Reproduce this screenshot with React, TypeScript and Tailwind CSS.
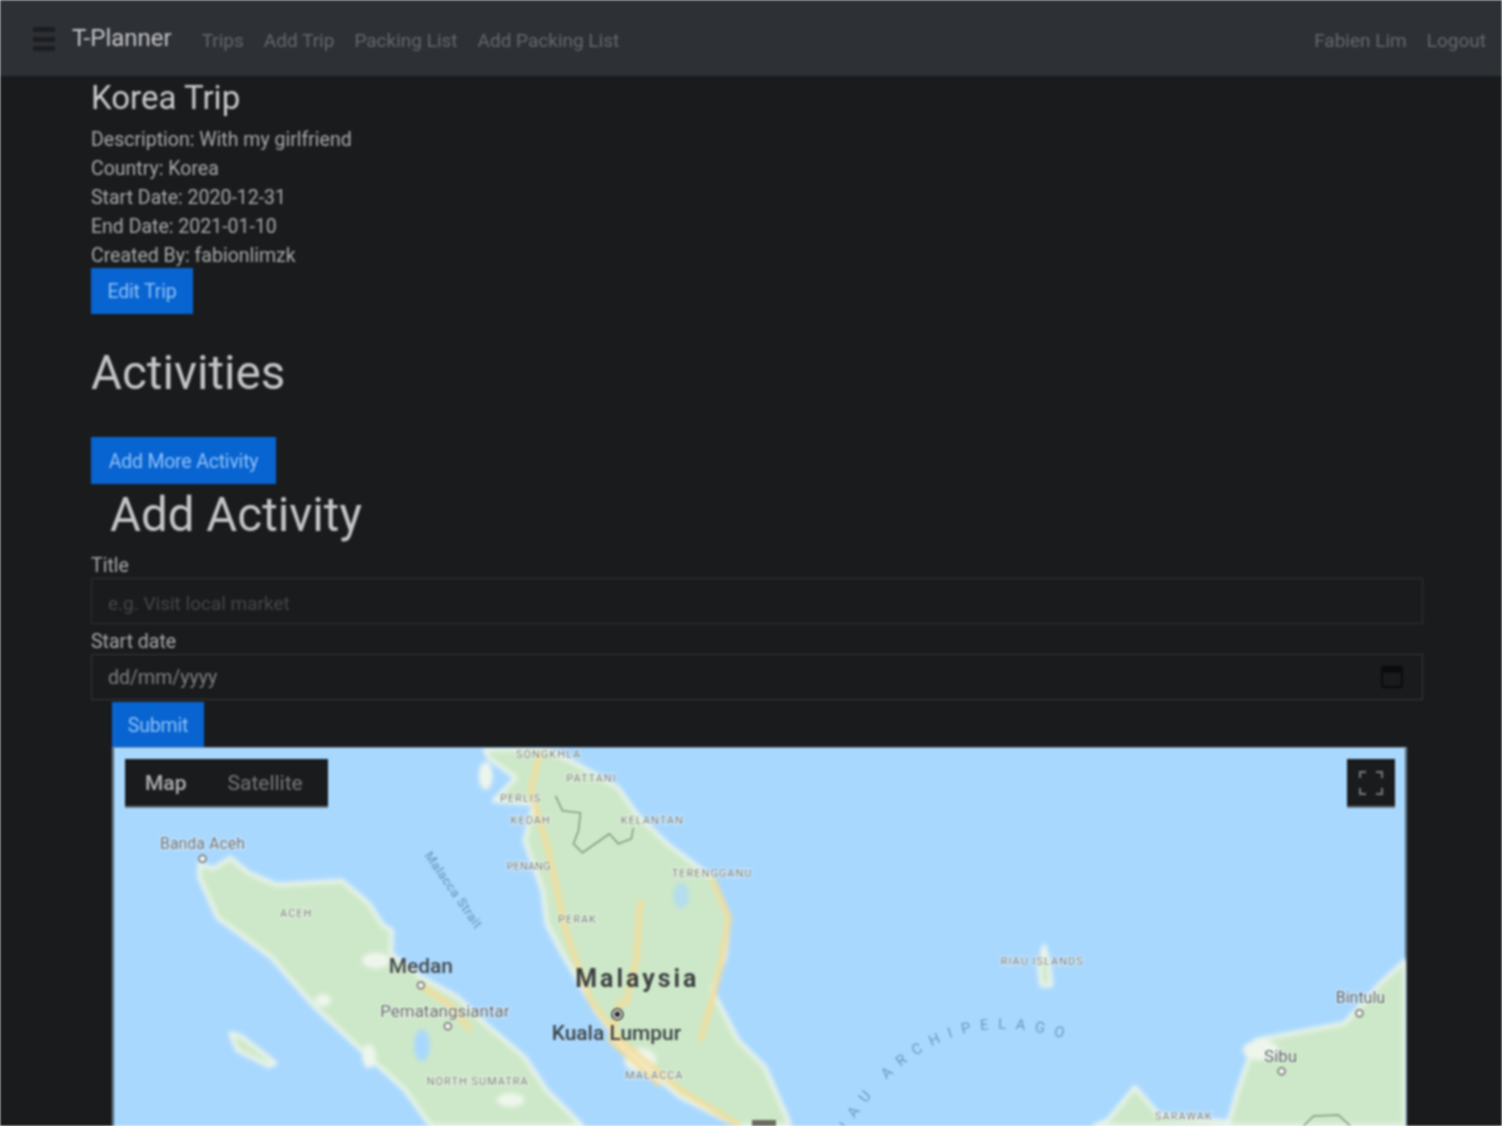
const NAV_LINKS = ["Trips", "Add Trip", "Packing List", "Add Packing List"];

const TRIP_FACTS = [
  "Description: With my girlfriend",
  "Country: Korea",
  "Start Date: 2020-12-31",
  "End Date: 2021-01-10",
  "Created By: fabionlimzk",
];

const LAND = [
  "198,863 212,868 229,857 247,872 275,884 341,880 368,903 382,925 391,930 390,953 421,977 457,997 484,1023 524,1057 546,1090 582,1126 430,1126 404,1090 368,1057 314,1007 270,957 216,917 198,877",
  "484,748 546,748 580,765 618,787 636,813 667,843 712,877 729,917 725,957 712,990 738,1040 765,1067 787,1117 790,1126 738,1126 680,1097 627,1053 595,1010 560,950 546,923 542,890 524,840 533,803 493,800 515,777 488,757",
  "1407,960 1382,983 1346,1023 1257,1040 1239,1090 1230,1122 1160,1115 1136,1087 1109,1120 1095,1126 1407,1126",
  "229,1033 240,1036 274,1063 268,1066 236,1050",
  "1045,945 1050,965 1052,985 1042,985 1040,965",
];

const ROADS = [
  "540,750 530,790 548,850 565,930 590,1000 620,1040 680,1090 740,1126",
  "712,877 729,917 722,960 712,1000 700,1040",
  "420,985 450,1005 470,1030",
  "620,1000 610,1040 660,1085",
  "640,900 636,960 625,1005",
];

// whitish patches where the towns and coast wash out the green
const PATCHES = [
  { x: 375, y: 960, rx: 14, ry: 8 },
  { x: 322, y: 1000, rx: 8, ry: 6 },
  { x: 368, y: 1056, rx: 7, ry: 12 },
  { x: 510, y: 1100, rx: 14, ry: 7 },
  { x: 485, y: 775, rx: 7, ry: 14 },
  { x: 640, y: 1060, rx: 16, ry: 12 },
  { x: 1262, y: 1050, rx: 18, ry: 10 },
];

const PLACES = [
  { label: "SONGKHLA", x: 548, y: 757, size: 11, fill: "#7b8079", spacing: 1 },
  { label: "PATTANI", x: 591, y: 781, size: 11, fill: "#7b8079", spacing: 1 },
  { label: "PERLIS", x: 520, y: 801, size: 11, fill: "#7b8079", spacing: 1 },
  { label: "KEDAH", x: 530, y: 823, size: 11, fill: "#7b8079", spacing: 1 },
  { label: "KELANTAN", x: 652, y: 823, size: 11, fill: "#7b8079", spacing: 1 },
  { label: "PENANG", x: 528, y: 869, size: 11, fill: "#7b8079", spacing: 0 },
  { label: "TERENGGANU", x: 712, y: 876, size: 11, fill: "#7b8079", spacing: 1 },
  { label: "PERAK", x: 577, y: 922, size: 11, fill: "#7b8079", spacing: 1 },
  { label: "ACEH", x: 295, y: 916, size: 11, fill: "#7b8079", spacing: 1 },
  { label: "Banda Aceh", x: 201, y: 848, size: 16, fill: "#6c7075", spacing: 0 },
  { label: "Pematangsiantar", x: 444, y: 1017, size: 17, fill: "#686c6c", spacing: 0 },
  { label: "NORTH SUMATRA", x: 477, y: 1085, size: 11, fill: "#7b8079", spacing: 1 },
  { label: "MALACCA", x: 654, y: 1079, size: 11, fill: "#7b8079", spacing: 1 },
  { label: "RIAU ISLANDS", x: 1043, y: 965, size: 11, fill: "#7b8079", spacing: 1 },
  { label: "Bintulu", x: 1362, y: 1003, size: 16, fill: "#5c6268", spacing: 0 },
  { label: "Sibu", x: 1282, y: 1062, size: 17, fill: "#5c6268", spacing: 0 },
  { label: "SARAWAK", x: 1185, y: 1120, size: 11, fill: "#7b8079", spacing: 1 },
];

function TownDot({ x, y }: { x: number; y: number }) {
  return <circle cx={x} cy={y} r="3.5" fill="#f4f4f0" stroke="#6f7473" strokeWidth="1.5" />;
}

function MapDrawing() {
  return (
    <svg viewBox="112 747 1295 379" className="block h-full w-full">
      <rect x="112" y="747" width="1295" height="379" fill="#a9d8fe" />
      <g className="blur-[2px]">
        {LAND.map((points) => (
          <polygon key={points} points={points} fill="#cde8c8" stroke="#eef6ec" strokeWidth="4" strokeLinejoin="round" />
        ))}
        {PATCHES.map((patch) => (
          <ellipse key={patch.x} cx={patch.x} cy={patch.y} rx={patch.rx} ry={patch.ry} fill="#eef6ec" />
        ))}
        {ROADS.map((points) => (
          <polyline key={points} points={points} fill="none" stroke="#f6dc96" strokeWidth="5" strokeLinejoin="round" />
        ))}
        <ellipse cx="681" cy="895" rx="8" ry="13" fill="#a9d8fe" opacity="0.7" />
        <ellipse cx="421" cy="1045" rx="8" ry="16" fill="#a9d8fe" />
      </g>
      <polyline
        points="555,795 562,810 580,812 578,830 573,843 582,852 609,833 618,843 631,838 633,827"
        fill="none"
        stroke="#7d9a80"
        strokeWidth="1.5"
      />
      <polyline points="1305,1126 1315,1116 1340,1115 1352,1126" fill="none" stroke="#7d9a80" strokeWidth="1.5" />

      <g fontFamily="Roboto, sans-serif" textAnchor="middle">
        {PLACES.map((place) => (
          <text
            key={place.label}
            x={place.x}
            y={place.y}
            fontSize={place.size}
            fill={place.fill}
            letterSpacing={place.spacing}
            stroke="#ffffff"
            strokeOpacity="0.55"
            strokeWidth="2"
            paintOrder="stroke"
          >
            {place.label}
          </text>
        ))}
        <text x="420" y="973" fontSize="21" fontWeight="500" fill="#45494b">Medan</text>
        <text x="637" y="987" fontSize="25" fontWeight="700" letterSpacing="3" fill="#3c4043">Malaysia</text>
        <text x="616" y="1040" fontSize="21" fontWeight="500" fill="#3c4347">Kuala Lumpur</text>
        <text
          transform="translate(449 892) rotate(55)"
          x="0"
          y="0"
          fontSize="13"
          fontWeight="500"
          letterSpacing="0.5"
          fill="#6f9cc6"
        >
          Malacca Strait
        </text>
      </g>

      <path id="archipelago-curve" d="M 838 1146 C 885 1062 960 1000 1075 1042" fill="none" />
      <text fontFamily="Roboto, sans-serif" fontSize="15" letterSpacing="9.2" fill="#6d97bc">
        <textPath href="#archipelago-curve">RIAU ARCHIPELAGO</textPath>
      </text>

      <TownDot x={201} y={858} />
      <TownDot x={420} y={985} />
      <TownDot x={447} y={1026} />
      <TownDot x={1361} y={1013} />
      <TownDot x={1283} y={1071} />
      <circle cx="617" cy="1014" r="5.5" fill="#f4f4f0" stroke="#2d2f30" strokeWidth="1.5" />
      <circle cx="617" cy="1014" r="3" fill="#2d2f30" />
      <rect x="752" y="1120" width="24" height="6" fill="#6a6a60" />
    </svg>
  );
}

function BlueButton({ label, className }: { label: string; className: string }) {
  return (
    <button type="button" className={`block bg-[#0864d1] pt-[2px] text-[19.5px] tracking-[-0.2px] text-[#8fc1f7] ${className}`}>
      {label}
    </button>
  );
}

export default function App() {
  return (
    <div className="h-[1126px] overflow-hidden bg-[#1a1b1d] font-['Roboto',sans-serif] blur-[1px]">
      <nav className="flex h-[76px] items-center bg-[#2d3035] pl-[33px] pr-[16px]">
        <svg width="22" height="26" viewBox="0 0 22 26" className="mt-[2px]">
          <rect x="0" y="1" width="22" height="5" fill="#1d1e21" />
          <rect x="0" y="11" width="22" height="5" fill="#1d1e21" />
          <rect x="0" y="20" width="22" height="5" fill="#1d1e21" />
        </svg>
        <span className="mb-[1px] ml-[17px] text-[24px] text-[#c4c5c7]">T-Planner</span>
        <div className="ml-[30px] mt-[6px] flex gap-[20px] text-[19px] text-[#65686d]">
          {NAV_LINKS.map((link) => (
            <span key={link}>{link}</span>
          ))}
        </div>
        <div className="ml-auto mt-[6px] flex gap-[20px] text-[19px] text-[#65686d]">
          <span>Fabien Lim</span>
          <span>Logout</span>
        </div>
      </nav>

      <main className="pl-[91px] pr-[79px]">
        <h2 className="text-[33px] leading-[44px] text-[#c9cacb]">Korea Trip</h2>
        <div className="mt-[5px] text-[19.5px] leading-[29px] text-[#a9aaab]">
          {TRIP_FACTS.map((fact) => (
            <p key={fact}>{fact}</p>
          ))}
        </div>
        <BlueButton label="Edit Trip" className="-mt-[2px] h-[46px] w-[102px]" />

        <h1 className="mt-[27px] text-[47.5px] leading-[64px] text-[#c4c5c6]">Activities</h1>
        <BlueButton label="Add More Activity" className="mt-[32px] h-[47px] w-[185px]" />
        <h1 className="ml-[19px] mt-[1px] text-[47.5px] leading-[60px] text-[#c4c5c6]">Add Activity</h1>

        <label className="mt-[5px] block pt-[4px] text-[19.5px] leading-[24px] text-[#a9aaab]">Title</label>
        <input
          readOnly
          placeholder="e.g. Visit local market"
          className="block h-[46px] w-full border border-[#2e2f33] bg-[#1a1b1d] px-[16px] pt-[4px] text-[19px] outline-none placeholder:text-[#45474b]"
        />
        <label className="mt-[2px] block pt-[4px] text-[19.5px] leading-[24px] text-[#a9aaab]">Start date</label>
        <div className="flex h-[46px] items-center justify-between border border-[#36373b] bg-[#1a1b1d] pl-[16px] pr-[19px] text-[19.5px] text-[#808184]">
          <span className="pt-[2px]">dd/mm/yyyy</span>
          <svg width="22" height="24" viewBox="0 0 22 24">
            <rect x="1" y="2" width="20" height="20" rx="2" fill="none" stroke="#0b0c0e" strokeWidth="2.5" />
            <rect x="1" y="2" width="20" height="6" fill="#0b0c0e" />
          </svg>
        </div>

        <div className="ml-[21px] mr-[16px] mt-[2px]">
          <BlueButton label="Submit" className="h-[45px] w-[92px]" />
          <div className="relative h-[379px] overflow-hidden border-l border-r border-t border-[#7d96ab]">
            <MapDrawing />
            <div className="absolute left-[12px] top-[11px] flex h-[49px] w-[203px] items-center border-b-2 border-[#6b7784] bg-[#1a1b1d] pt-[3px] text-[21px]">
              <span className="ml-[20px] font-medium text-[#b0b1b2]">Map</span>
              <span className="ml-[41px] text-[#77797b]">Satellite</span>
            </div>
            <div className="absolute right-[11px] top-[11px] flex h-[49px] w-[48px] items-center justify-center border-b-2 border-[#6b7784] bg-[#1a1b1d]">
              <svg width="24" height="24" viewBox="0 0 24 24" fill="none" stroke="#77797b" strokeWidth="2">
                <path d="M1 7V1h6M17 1h6v6M23 17v6h-6M7 23H1v-6" />
              </svg>
            </div>
          </div>
        </div>
      </main>
    </div>
  );
}
